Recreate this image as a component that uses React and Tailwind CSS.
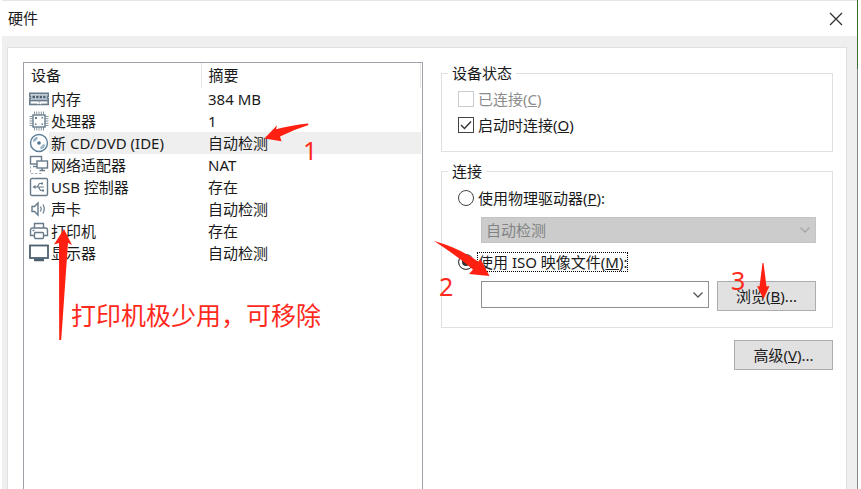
import { useState } from 'react'

const svgProps = {
  width: 20,
  height: 20,
  viewBox: '0 0 20 20',
  fill: 'none',
  stroke: '#667a8a',
  strokeWidth: 1.4,
  'aria-hidden': true,
}

const MemoryIcon = () => (
  <svg {...svgProps}>
    <path d="M.7 4.200h18.600v3.200h-.8v2h.8v6.100H.7V9.400h.8v-2H.7z" fill="#c3ced7" />
    <path d="M1 11.500h18" />
    <path d="M3.500 8H6M7.200 8h2.300M10.700 8H13M14.200 8h2.300" stroke="#4a5d6c" strokeWidth="2.600" />
    <path d="M2 13.500h6.500l1 1.500M17.500 13.500H12l-1 1.500" stroke="#fff" strokeWidth="1.400" />
  </svg>
)

const CpuIcon = () => (
  <svg {...svgProps}>
    <path d="M5.500 .5v3M7.700 .5v3M10 .5v3M12.300 .5v3M14.500 .5v3M5.500 16.500v3M7.700 16.500v3M10 16.500v3M12.300 16.500v3M14.500 16.500v3M.5 5.500h3M.5 7.700h3M.5 10h3M.5 12.300h3M.5 14.500h3M16.500 5.500h3M16.500 7.700h3M16.500 10h3M16.500 12.300h3M16.500 14.500h3" strokeWidth="1" stroke="#8796a2" />
    <rect x="4" y="4" width="12" height="12" fill="#fff" />
    <path d="M6 6h2v2H6zM6 12.500h1.500V14H6zM12.500 12.500H14V14h-1.500zM12.500 6H14v1.500h-1.500z" fill="#667a8a" stroke="none" />
  </svg>
)

const DiscIcon = () => (
  <svg {...svgProps} stroke="#5b7f9b">
    <circle cx="10" cy="10" r="8.500" fill="#fff" />
    <circle cx="10" cy="10" r="1.800" fill="#4d7391" stroke="none" />
    <path d="M4.800 8.500A5.500 5.500 0 0 1 8.500 4.800M15.200 11.500a5.500 5.500 0 0 1-3.700 3.700" strokeWidth="2.600" stroke="#94b0c5" />
  </svg>
)

const NetworkIcon = () => (
  <svg {...svgProps}>
    <rect x="1.500" y="1.500" width="11" height="7.500" />
    <path d="M4 11.500h5" />
    <rect x="8" y="6" width="10.500" height="7" fill="#fff" />
    <path d="M10.500 15.500H16M13.200 13v2.500" />
    <path d="M1.500 11v7.500H13" strokeDasharray="2.500 1.500" strokeWidth="1" stroke="#a5b1bb" />
  </svg>
)

const UsbIcon = () => (
  <svg {...svgProps}>
    <rect x="1.500" y="1.500" width="17" height="17" rx="1.500" />
    <path d="M5 10h10M8 10l2.500-3.500h2M9.500 10l2 3.500h1.500" strokeWidth="1.200" />
    <path d="M3.500 10l3-2v4z" fill="#667a8a" stroke="none" />
    <path d="M12 5.500h2v2h-2zM13 12.500h2v2h-2z" fill="#667a8a" stroke="none" />
  </svg>
)

const SoundIcon = () => (
  <svg {...svgProps}>
    <path d="M3 7.500h2.500L9 4v12l-3.500-3.500H3z" />
    <path d="M11.500 7.500q1.500 2.500 0 5M14 5.500q2.500 4.500 0 9" strokeWidth="1.200" />
  </svg>
)

const PrinterIcon = () => (
  <svg {...svgProps}>
    <path d="M5.500 7V2.500h9V7" />
    <path d="M5 14.500H1.500V9q0-2 2-2h13q2 0 2 2v5.500H15" />
    <rect x="5.500" y="11.500" width="9" height="6" rx="1" />
    <path d="M3.500 9.500h2" />
  </svg>
)

const DisplayIcon = () => (
  <svg {...svgProps}>
    <rect x="1" y="2.500" width="18" height="12.500" stroke="#4d6070" strokeWidth="1.800" />
    <path d="M5 17h10" strokeWidth="2.500" stroke="#4d6070" />
  </svg>
)

const devices = [
  { name: '内存', summary: '384 MB', Icon: MemoryIcon },
  { name: '处理器', summary: '1', Icon: CpuIcon },
  { name: '新 CD/DVD (IDE)', summary: '自动检测', Icon: DiscIcon },
  { name: '网络适配器', summary: 'NAT', Icon: NetworkIcon },
  { name: 'USB 控制器', summary: '存在', Icon: UsbIcon },
  { name: '声卡', summary: '自动检测', Icon: SoundIcon },
  { name: '打印机', summary: '存在', Icon: PrinterIcon },
  { name: '显示器', summary: '自动检测', Icon: DisplayIcon },
]

const Chevron = ({ className }) => (
  <svg className={className} width="12" height="8" viewBox="0 0 12 8" fill="none" aria-hidden="true">
    <path d="M1.500 1.500L6 6l4.500-4.500" stroke="currentColor" strokeWidth="1.300" />
  </svg>
)

const Group = ({ title, children }) => (
  <fieldset className="border border-[#e0e0e0] px-4">
    <legend className="-ml-[10px] px-1 leading-[22px]">{title}</legend>
    {children}
  </fieldset>
)

const DeviceList = ({ selected, onSelect }) => (
  <div className="flex-[398] border border-b-0 border-[#a0a2aa] pr-px">
    <table className="w-full table-fixed border-collapse text-left">
      <thead>
        <tr className="h-[25px]">
          <th className="w-[177px] border-r border-[#e5e5e5] p-0 pl-[7px] font-normal">设备</th>
          <th className="border-r border-[#e5e5e5] p-0 pl-[7px] font-normal">摘要</th>
        </tr>
      </thead>
      <tbody>
        {devices.map(({ name, summary, Icon }) => {
          const bg = name === selected ? 'bg-[#efefef]' : ''
          return (
            <tr key={name} onClick={() => onSelect(name)}>
              <td className="p-0">
                <div className="flex items-center pl-[5px]">
                  <Icon />
                  <span className={`flex-1 pl-[2px] leading-[22px] ${bg}`}>{name}</span>
                </div>
              </td>
              <td className={`p-0 pl-[7px] leading-[22px] ${bg}`}>{summary}</td>
            </tr>
          )
        })}
      </tbody>
    </table>
  </div>
)

const radioClass =
  'h-4 w-4 appearance-none rounded-full border border-[#444] bg-white checked:bg-[#333] checked:shadow-[inset_0_0_0_3px_#fff]'
const buttonClass = 'h-[30px] w-[99px] border border-[#adadad] bg-[#e1e1e1]'

const Settings = () => {
  const [connectOnStart, setConnectOnStart] = useState(true)
  const [source, setSource] = useState('iso')

  return (
    <div className="flex flex-[393] flex-col">
      <Group title="设备状态">
        <div className="flex flex-col items-start gap-1 pt-1 pb-[15px] leading-[22px]">
          <label className="flex items-center gap-1 text-[#8c8c8c]">
            <input type="checkbox" disabled className="h-4 w-4 appearance-none border border-[#ccc] bg-white" />
            <span>已连接(<u>C</u>)</span>
          </label>
          <label className="flex items-center gap-1">
            <span className="relative flex">
              <input
                type="checkbox"
                checked={connectOnStart}
                onChange={(e) => setConnectOnStart(e.target.checked)}
                className="h-4 w-4 appearance-none border border-[#444] bg-white"
              />
              {connectOnStart && (
                <svg className="pointer-events-none absolute inset-0" width="16" height="16" viewBox="0 0 16 16" fill="none" aria-hidden="true">
                  <path d="M3 8l3.500 3.500L13 4.500" stroke="#333" strokeWidth="1.400" />
                </svg>
              )}
            </span>
            <span>启动时连接(<u>O</u>)</span>
          </label>
        </div>
      </Group>

      <div className="mt-2">
        <Group title="连接">
          <div className="flex flex-col items-start gap-2 pt-[5px] pb-4 leading-[22px]">
            <label className="flex items-center gap-1">
              <input type="radio" name="source" checked={source === 'drive'} onChange={() => setSource('drive')} className={radioClass} />
              <span>使用物理驱动器(<u>P</u>):</span>
            </label>
            <div className="relative flex self-stretch pl-[23px]">
              <select aria-label="物理驱动器" disabled className="h-[26px] w-full appearance-none border border-[#c4c4c4] bg-[#ccc] pl-1 text-[#838383] opacity-100">
                <option>自动检测</option>
              </select>
              <Chevron className="pointer-events-none absolute top-[9px] right-[5px] text-[#a5a5a5]" />
            </div>
            <label className="flex h-[22px] items-center gap-[3px]">
              <input type="radio" name="source" checked={source === 'iso'} onChange={() => setSource('iso')} className={radioClass} />
              <span className="border border-dotted border-black leading-[18px]">
                使用 ISO 映像文件(<u>M</u>):
              </span>
            </label>
            <div className="flex gap-2 self-stretch pl-[23px]">
              <div className="relative flex-1">
                <select aria-label="ISO 映像文件" className="h-[27px] w-full appearance-none border border-[#8f8f8f] bg-white pl-1">
                  <option></option>
                </select>
                <Chevron className="pointer-events-none absolute top-[10px] right-[5px] text-[#555]" />
              </div>
              <button type="button" className={buttonClass}>浏览(<u>B</u>)...</button>
            </div>
          </div>
        </Group>
      </div>

      <button type="button" className={`mt-3 self-end ${buttonClass}`}>高级(<u>V</u>)...</button>
    </div>
  )
}

// hand-drawn red hints on top of the dialog
const Annotations = () => (
  <div className="pointer-events-none absolute inset-0 text-[25px] leading-8 text-[#ff2a1c]">
    <svg className="absolute top-0 left-0" width="861" height="489" viewBox="0 0 861 489" fill="#ff2012" aria-hidden="true">
      <path d="M264.500 138.500L277 125.300L276 129.300Q290 125.500 308 123.500L308.500 125Q294 129.500 280 136.500L281.500 141.200Z" />
      <path d="M434 241Q460 248 478.500 262L480.500 259L489.500 276L469 274L473 269.500Q456 255 434 241Z" />
      <path d="M762.500 263H763.500L766.500 286.500L769.500 286L763.500 299L757 286L759.500 286.500Z" />
      <path d="M64 229L72 245L68 243L61.200 340H59.200L59 243L54 244.500Z" />
    </svg>
    <span className="absolute top-[134px] left-[303px]">1</span>
    <span className="absolute top-[270px] left-[439px]">2</span>
    <span className="absolute top-[264px] left-[731px]">3</span>
    <span className="absolute top-[299px] left-[71px] whitespace-nowrap">打印机极少用，可移除</span>
  </div>
)

function App() {
  const [selected, setSelected] = useState('新 CD/DVD (IDE)')

  return (
    <div className="relative flex min-h-screen bg-white pr-[3px] pl-[2px] font-['Noto_Sans','Noto_Sans_CJK_SC',sans-serif] text-[15px] text-[#1a1a1a]">
      <div className="flex flex-1 flex-col border-t border-[#e5e5e5]">
        <header className="flex h-[35px] items-center justify-between pr-[14px] pl-[6px]">
          <h1>硬件</h1>
          <button type="button" aria-label="关闭">
            <svg width="14" height="14" viewBox="0 0 14 14" aria-hidden="true">
              <path d="M1 1l12 12M13 1L1 13" stroke="#333" strokeWidth="1.300" />
            </svg>
          </button>
        </header>
        <main className="flex flex-1 bg-[#efefef] pt-[11px] pr-[10px] pl-[5px]">
          <div className="flex flex-1 gap-[18px] border border-b-0 border-[#e0e0e0] bg-white pt-[14px] pr-[13px] pl-[15px]">
            <DeviceList selected={selected} onSelect={setSelected} />
            <Settings />
          </div>
        </main>
      </div>
      <div className="flex w-px flex-col bg-[#8a8a8a]">
        <div className="h-[69px] bg-[#3f6b2f]" />
      </div>
      <Annotations />
    </div>
  )
}

export default App
